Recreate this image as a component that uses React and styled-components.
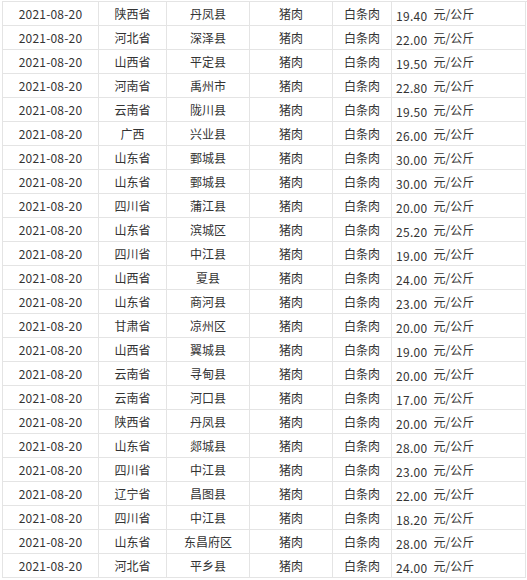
import React from "react";
import styled, { createGlobalStyle } from "styled-components";

const GlobalStyle = createGlobalStyle`
  html, body {
    margin: 0;
    padding: 0;
    background: #fff;
  }
  body {
    font-family: "Noto Sans CJK SC", "Noto Sans", sans-serif;
    font-size: 12px;
    color: #333;
  }
`;

const Table = styled.div`
  margin: 1px 0 0 2px;
  width: 524px;
  border-top: 1px solid #e4e4e4;
  border-left: 1px solid #e4e4e4;
`;

const Row = styled.div`
  display: grid;
  grid-template-columns: 96px 68px 83px 83px 59px 134px;
  height: 24px;
`;

const Cell = styled.div`
  box-sizing: border-box;
  display: flex;
  align-items: center;
  justify-content: ${({ $left }) => ($left ? "flex-start" : "center")};
  padding-left: ${({ $left }) => ($left ? "4px" : "0")};
  border-right: 1px solid #e4e4e4;
  border-bottom: 1px solid #e4e4e4;
  white-space: nowrap;
  line-height: 1;
`;

const DateText = styled.span`
  letter-spacing: 0.2px;
`;

// the number sits a little lower than the unit in the original
const Num = styled.span`
  margin: 4px 6px 0 0;
  letter-spacing: 0.3px;
`;

const rows = [
  ["陕西省", "丹凤县", "19.40"],
  ["河北省", "深泽县", "22.00"],
  ["山西省", "平定县", "19.50"],
  ["河南省", "禹州市", "22.80"],
  ["云南省", "陇川县", "19.50"],
  ["广西", "兴业县", "26.00"],
  ["山东省", "鄄城县", "30.00"],
  ["山东省", "鄄城县", "30.00"],
  ["四川省", "蒲江县", "20.00"],
  ["山东省", "滨城区", "25.20"],
  ["四川省", "中江县", "19.00"],
  ["山西省", "夏县", "24.00"],
  ["山东省", "商河县", "23.00"],
  ["甘肃省", "凉州区", "20.00"],
  ["山西省", "翼城县", "19.00"],
  ["云南省", "寻甸县", "20.00"],
  ["云南省", "河口县", "17.00"],
  ["陕西省", "丹凤县", "20.00"],
  ["山东省", "郯城县", "28.00"],
  ["四川省", "中江县", "23.00"],
  ["辽宁省", "昌图县", "22.00"],
  ["四川省", "中江县", "18.20"],
  ["山东省", "东昌府区", "28.00"],
  ["河北省", "平乡县", "24.00"],
];

const App = () => {
  return (
    <>
      <GlobalStyle />
      <Table>
        {rows.map(([province, county, price], i) => (
          <Row key={i}>
            <Cell>
              <DateText>2021-08-20</DateText>
            </Cell>
            <Cell>{province}</Cell>
            <Cell>{county}</Cell>
            <Cell>猪肉</Cell>
            <Cell>白条肉</Cell>
            <Cell $left>
              <Num>{price}</Num>
              <span>元/公斤</span>
            </Cell>
          </Row>
        ))}
      </Table>
    </>
  );
};

export default App;
